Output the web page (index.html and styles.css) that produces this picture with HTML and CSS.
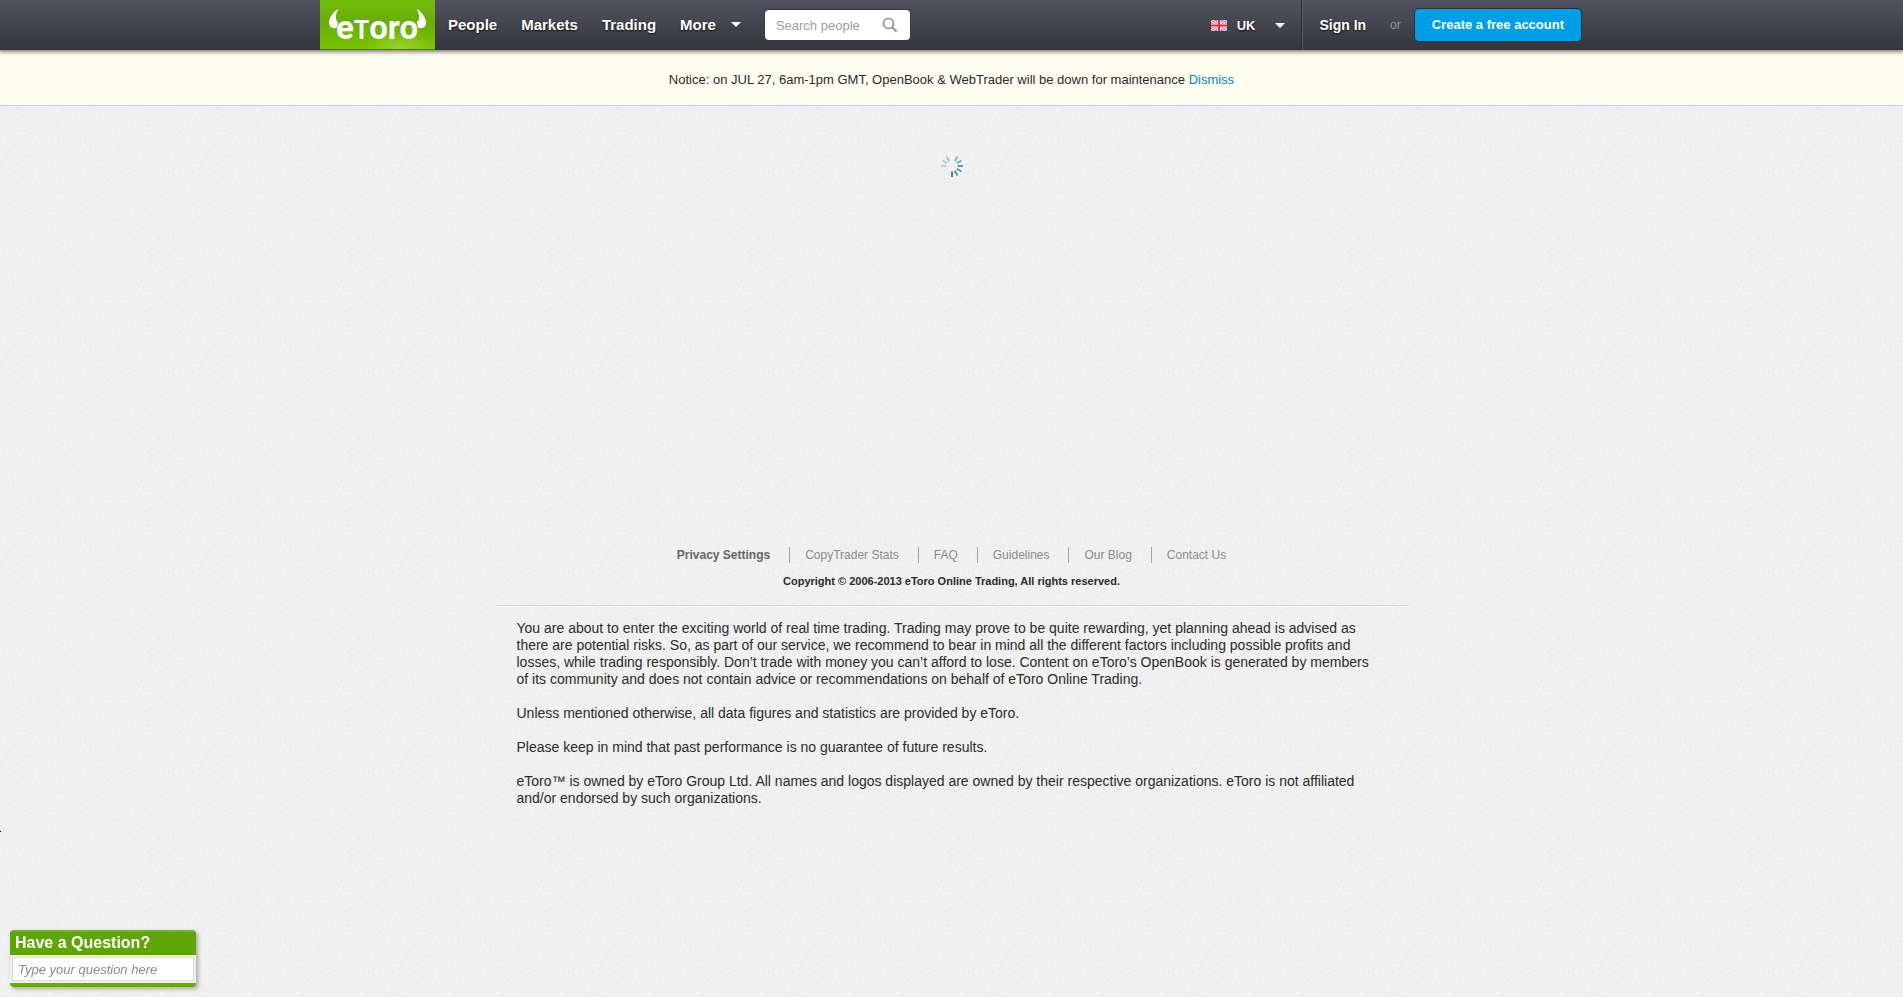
FILE: index.html
```html
<!DOCTYPE html>
<html lang="en">
<head>
<meta charset="utf-8">
<title>eToro OpenBook</title>
<link rel="stylesheet" href="styles.css">
</head>
<body>
<header class="topbar">
  <div class="topbar-inner">
    <a class="logo" href="#" aria-label="eToro">
      <svg width="115" height="50" viewBox="0 0 115 50" aria-hidden="true">
        <g fill="#fff">
          <path d="M18.500 9C12 12 9 19 9 23C9 27 13 29.500 17 27.500L18 22C15 20 15 15 18.500 9Z"/>
          <path d="M96.500 9C103 12 106 19 106 23C106 27 102 29.500 98 27.500L97 22C100 20 100 15 96.500 9Z"/>
          <text class="wordmark" x="57" y="39" text-anchor="middle" font-size="33">e<tspan font-size="25">T</tspan>oro</text>
        </g>
      </svg>
    </a>
    <nav class="nav">
      <a href="#">People</a>
      <a href="#">Markets</a>
      <a href="#">Trading</a>
      <button class="menu-button more" type="button">More <span class="caret"></span></button>
    </nav>
    <form class="search">
      <input type="text" placeholder="Search people" aria-label="Search people">
      <button type="submit" aria-label="Search">
        <svg width="16" height="16" viewBox="0 0 16 16"><circle cx="6.500" cy="6.500" r="5" fill="none" stroke="#a3a3a8" stroke-width="2.200"/><path d="M10.300 10.300L14.500 14.500" stroke="#a3a3a8" stroke-width="2.600"/></svg>
      </button>
    </form>
    <div class="account">
      <button class="menu-button locale" type="button">
        <svg width="16" height="11" viewBox="0 0 16 11" aria-hidden="true"><rect width="16" height="11" fill="#7f88d6"/><path d="M0 0L16 11M16 0L0 11" stroke="#fff" stroke-width="2.800"/><path d="M0 0L16 11M16 0L0 11" stroke="#f06670" stroke-width="1.200"/><path d="M8 0V11M0 5.500H16" stroke="#fff" stroke-width="3.400"/><path d="M8 0V11M0 5.500H16" stroke="#f5202c" stroke-width="2"/></svg>
        UK <span class="caret"></span>
      </button>
      <a class="sign-in" href="#">Sign In</a>
      <span class="or">or</span>
      <a class="create" href="#">Create a free account</a>
    </div>
  </div>
</header>
<div class="notice">Notice: on JUL 27, 6am-1pm GMT, OpenBook &amp; WebTrader will be down for maintenance <a href="#">Dismiss</a></div>
<main class="content">
  <svg class="loader" width="24" height="24" viewBox="-12 -12 24 24" role="img" aria-label="Loading" stroke-width="2">
    <path d="M0 5.500V11" stroke="#3f87a0"/>
    <path d="M0 5.500V11" stroke="#5795aa" transform="rotate(-30)"/>
    <path d="M0 5.500V11" stroke="#5795aa" transform="rotate(-60)"/>
    <path d="M0 5.500V11" stroke="#5e9bb0" transform="rotate(-90)"/>
    <path d="M0 5.500V11" stroke="#78abbc" transform="rotate(-120)"/>
    <path d="M0 5.500V11" stroke="#8ab8c7" transform="rotate(-150)"/>
    <path d="M0 5.500V11" stroke="#fdfefe" transform="rotate(180)"/>
    <path d="M0 5.500V11" stroke="#a2c8d4" transform="rotate(150)"/>
    <path d="M0 5.500V11" stroke="#a8ccd7" transform="rotate(120)"/>
    <path d="M0 5.500V11" stroke="#b4d4dd" transform="rotate(90)"/>
    <path d="M0 5.500V11" stroke="#e0eff4" transform="rotate(60)"/>
    <path d="M0 5.500V11" stroke="#e4f2f6" transform="rotate(30)"/>
  </svg>
</main>
<footer class="footer">
  <ul class="footer-links">
    <li><a class="strong" href="#">Privacy Settings</a></li>
    <li><a href="#">CopyTrader Stats</a></li>
    <li><a href="#">FAQ</a></li>
    <li><a href="#">Guidelines</a></li>
    <li><a href="#">Our Blog</a></li>
    <li><a href="#">Contact Us</a></li>
  </ul>
  <p class="copyright">Copyright © 2006-2013 eToro Online Trading, All rights reserved.</p>
  <div class="legal">
    <p>You are about to enter the exciting world of real time trading. Trading may prove to be quite rewarding, yet planning ahead is advised as there are potential risks. So, as part of our service, we recommend to bear in mind all the different factors including possible profits and losses, while trading responsibly. Don’t trade with money you can’t afford to lose. Content on eToro’s OpenBook is generated by members of its community and does not contain advice or recommendations on behalf of eToro Online Trading.</p>
    <p>Unless mentioned otherwise, all data figures and statistics are provided by eToro.</p>
    <p>Please keep in mind that past performance is no guarantee of future results.</p>
    <p>eToro™ is owned by eToro Group Ltd. All names and logos displayed are owned by their respective organizations. eToro is not affiliated and/or endorsed by such organizations.</p>
  </div>
</footer>
<div class="tracker"></div>
<form class="question">
  <label for="question">Have a Question?</label>
  <div class="question-body"><input id="question" type="text" placeholder="Type your question here"></div>
</form>
</body>
</html>
```

FILE: styles.css
```css
* {
  box-sizing: border-box;
}

body {
  margin: 0;
  color: #2b2b2b;
  font-family: "Liberation Sans", Arial, sans-serif;
  font-size: 14px;
  line-height: 17px;
  background: #f2f2f2 url("data:image/svg+xml,%3Csvg xmlns='http://www.w3.org/2000/svg' width='200' height='200'%3E%3Cfilter id='n' x='0' y='0' width='1' height='1'%3E%3CfeTurbulence type='fractalNoise' baseFrequency='.4' numOctaves='2' stitchTiles='stitch'/%3E%3CfeColorMatrix values='0 0 0 0 .5 0 0 0 0 .5 0 0 0 0 .5 .25 0 0 0 -.09'/%3E%3C/filter%3E%3Crect width='200' height='200' filter='url(%23n)'/%3E%3C/svg%3E");
}

a {
  color: inherit;
  text-decoration: none;
}

button,
input {
  font-family: inherit;
}

.topbar {
  position: relative;
  height: 50px;
  background: linear-gradient(#50535f, #34363c);
  box-shadow: 0 1px 4px 1px rgba(0, 0, 0, 0.5);
}

.topbar-inner {
  display: flex;
  align-items: center;
  max-width: 1263px;
  height: 100%;
  margin: 0 auto;
}

.logo {
  width: 115px;
  height: 50px;
  background:
    radial-gradient(ellipse 36px 18px at 70% 100%, #9bd02e, transparent),
    linear-gradient(#72bd0a, #68ad0b 45%, #79c300);
  border-bottom: 1px solid #4a7d08;
}

.logo svg {
  display: block;
}

.wordmark {
  font-family: "Liberation Sans Narrow", Roboto, sans-serif;
  font-weight: 700;
}

.nav {
  display: flex;
  align-items: center;
  gap: 24px;
  margin-left: 13px;
  padding-bottom: 1px;
  color: #fff;
  font-size: 15px;
  font-weight: 700;
  text-shadow: 0 1px 2px #111;
}

.menu-button {
  display: flex;
  align-items: center;
  padding: 0;
  color: #fff;
  font-size: 15px;
  font-weight: 700;
  line-height: 17px;
  text-shadow: 0 1px 2px #111;
  background: none;
  border: 0;
}

.more {
  gap: 15px;
}

.caret {
  border: 5px solid transparent;
  border-top-color: #fff;
  border-bottom: 0;
}

.search {
  display: flex;
  align-items: center;
  width: 145px;
  height: 30px;
  margin-left: 24px;
  padding: 0 12px 0 11px;
  background: #fff;
  border-radius: 4px;
  box-shadow: 0 0 0 1px #393b43;
}

.search input {
  flex: 1;
  min-width: 0;
  padding: 0;
  font-size: 13px;
  border: 0;
  outline: 0;
}

.search input::placeholder {
  color: #a0a0a0;
}

.search button {
  padding: 0;
  background: none;
  border: 0;
}

.search svg {
  display: block;
}

.account {
  display: flex;
  align-items: center;
  height: 100%;
  margin-right: 2px;
  margin-left: auto;
}

.locale {
  gap: 10px;
  height: 100%;
  padding-right: 16px;
  font-size: 13px;
  border-right: 1px solid #2a2d34;
  box-shadow: 1px 0 #555c6a;
}

.locale .caret {
  margin-left: 10px;
}

.sign-in {
  margin: 0 24px 0 17px;
  color: #fff;
  font-weight: 700;
  text-shadow: 0 1px 2px #111;
}

.or {
  margin-right: 14px;
  color: #96979c;
  font-size: 12px;
}

.create {
  padding: 0 17px;
  color: #fff;
  font-size: 13px;
  font-weight: 700;
  line-height: 32px;
  background: #009ee6;
  border-radius: 4px;
  box-shadow: 0 0 0 1px #24303f;
}

.notice {
  padding: 21px 20px 17px;
  font-size: 13px;
  text-align: center;
  background: #fffdef;
  border-bottom: 1px solid #fbcb70;
}

.notice a {
  color: #0b84c6;
}

.content {
  display: flex;
  justify-content: center;
  min-height: 441px;
  padding-top: 48px;
}

.footer {
  max-width: 912px;
  margin: 0 auto;
}

.footer-links {
  display: flex;
  justify-content: center;
  margin: 0;
  padding: 0;
  color: #8b8b8b;
  font-size: 12px;
  line-height: 16px;
  list-style: none;
}

.footer-links li + li {
  margin-left: 19px;
  padding-left: 15px;
  border-left: 1px solid #a5a5a5;
}

.footer-links .strong {
  color: #666;
  font-weight: 700;
}

.copyright {
  margin: 10px 0 15px;
  font-size: 11px;
  font-weight: 700;
  text-align: center;
}

.legal {
  padding: 14px 24px 0 21px;
  border-top: 1px solid #d2d2d2;
  box-shadow: inset 0 1px #fff;
}

.legal p {
  margin: 0 0 17px;
}

.tracker {
  width: 1px;
  height: 1px;
  margin-top: 24px;
  background: #000;
}

.question {
  position: fixed;
  bottom: 10px;
  left: 10px;
  width: 186px;
  background: #efefef;
  border-top: 2px solid #72b02c;
  border-bottom: 4px solid #66aa0e;
  border-radius: 4px;
  box-shadow: 2px 2px 4px rgba(0, 0, 0, 0.3);
}

.question label {
  display: block;
  padding: 0 5px 2px;
  color: #fff;
  font-size: 16px;
  font-weight: 700;
  line-height: 21px;
  background: #5fa503;
}

.question-body {
  padding: 2px;
}

.question input {
  display: block;
  width: 100%;
  height: 24px;
  padding: 0 5px;
  font-size: 13px;
  font-style: italic;
  background: #fff;
  border: 1px solid #ddd;
}

.question input::placeholder {
  color: #8a8a8a;
}
```
